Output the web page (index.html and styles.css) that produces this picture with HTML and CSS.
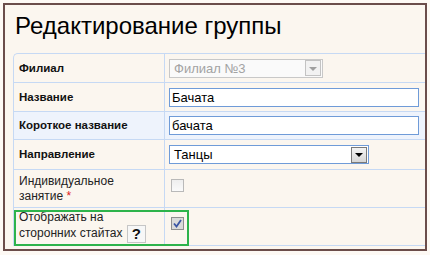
FILE: index.html
```html
<!DOCTYPE html>
<html lang="ru">
<head>
    <meta charset="UTF-8">
    <title>Редактирование группы</title>
    <link rel="stylesheet" href="styles.css">
</head>
<body>
    <div class="panel">
        <h1>Редактирование группы</h1>
        <table class="form-table">
            <tr>
                <td class="label bold">Филиал</td>
                <td class="value">
                    <div class="select disabled">
                        <span class="select-text">Филиал №3</span>
                        <span class="select-btn"><span class="arrow"></span></span>
                    </div>
                </td>
            </tr>
            <tr>
                <td class="label bold">Название</td>
                <td class="value"><div class="input">Бачата</div></td>
            </tr>
            <tr class="active">
                <td class="label bold">Короткое название</td>
                <td class="value"><div class="input">бачата</div></td>
            </tr>
            <tr>
                <td class="label bold">Направление</td>
                <td class="value">
                    <div class="select wide">
                        <span class="select-text">Танцы</span>
                        <span class="select-btn"><span class="arrow"></span></span>
                    </div>
                </td>
            </tr>
            <tr class="tall">
                <td class="label">Индивидуальное<br>занятие <span class="req">*</span></td>
                <td class="value top"><span class="check"></span></td>
            </tr>
            <tr class="tall">
                <td class="label highlight">
                    Отображать на<br>сторонних стайтах <span class="help">?</span>
                    <span class="outline"></span>
                </td>
                <td class="value top">
                    <span class="check checked">
                        <svg width="11" height="11" viewBox="0 0 11 11"><path d="M2 5.5 L4.5 8.5 L9 2" fill="none" stroke="#3a55a4" stroke-width="1.8"/></svg>
                    </span>
                </td>
            </tr>
        </table>
    </div>
</body>
</html>
```

FILE: styles.css
```css
body {
    margin: 0;
    background-color: #fdf9f4;
    font-family: "Liberation Sans", Arial, sans-serif;
}

.panel {
    margin: 3px;
    width: 412px;
    height: 244px;
    border: 2px solid #6b4d4a;
    background-color: #fbf6ef;
    padding-left: 8px;
}

h1 {
    font-size: 24px;
    font-weight: normal;
    color: #000;
    margin: 0;
    padding: 8px 0 0 2px;
    height: 48px;
    box-sizing: border-box;
    line-height: 26px;
}

.form-table {
    width: 100%;
    border-collapse: separate;
    border-spacing: 0;
    border-top: 1px solid #c6d9f4;
    border-left: 1px solid #c6d9f4;
    border-top-left-radius: 5px;
    font-size: 12px;
}

.form-table td {
    border-bottom: 1px solid #c6d9f4;
    height: 28px;
    padding: 0;
    vertical-align: middle;
}

.form-table tr.tall td {
    height: 37px;
}

.form-table tr:nth-child(3) td {
    height: 27px;
}

.form-table tr:nth-child(4) td {
    height: 29px;
}

.label {
    width: 145px;
    padding-left: 5px !important;
    border-right: 1px solid #c6d9f4;
    color: #222;
    line-height: 15px;
}

.label.bold {
    font-weight: bold;
    font-size: 11.5px;
    color: #111;
}

.value {
    padding-left: 4px !important;
    font-size: 13px;
}

.value.top {
    vertical-align: top;
}

tr.active td {
    background-color: #eef3fc;
}

.req {
    color: #e02020;
}

.input {
    width: 246px;
    height: 17px;
    border: 1px solid #6f9bd8;
    background: #fff;
    line-height: 17px;
    padding-left: 2px;
    color: #000;
}

.select {
    display: flex;
    align-items: center;
    height: 17px;
    border: 1px solid #c8c8c8;
    background: #fafafa;
    width: 152px;
}

.select-text {
    flex: 1;
    padding-left: 4px;
    color: #a3a3a3;
}

.select-btn {
    width: 16px;
    height: 16px;
    margin-right: 1px;
    border: 1px solid #c3c3c3;
    background: #f2f2f2;
    display: flex;
    align-items: center;
    justify-content: center;
    box-sizing: border-box;
}

.arrow {
    width: 0;
    height: 0;
    border-left: 4px solid transparent;
    border-right: 4px solid transparent;
    border-top: 4px solid #a0a0a0;
    margin-top: 1px;
}

.select.wide {
    width: 198px;
    border-color: #6f9bd8;
    background: #fff;
}

.select.wide .select-text {
    color: #000;
}

.select.wide .select-btn {
    border-color: #7a7a7a;
    background: linear-gradient(#f4f4f4, #d6d6d6);
}

.select.wide .arrow {
    border-top-color: #000;
}

.check {
    display: flex;
    align-items: center;
    justify-content: center;
    width: 13px;
    height: 13px;
    border: 1px solid #b9b9b9;
    background: linear-gradient(#eeeeee, #fafafa);
    box-sizing: border-box;
    margin: 9px 0 0 2px;
}

.check.checked {
    border-color: #8f8f8f;
    background: #dadada;
}

.highlight {
    position: relative;
}

.help {
    display: inline-block;
    width: 17px;
    height: 16px;
    border: 1px solid #c6c6c6;
    background: #f7f7f7;
    text-align: center;
    font-weight: bold;
    font-size: 15px;
    line-height: 16px;
    color: #111;
    vertical-align: middle;
    margin-left: 1px;
}

.outline {
    position: absolute;
    left: 0;
    top: 2px;
    right: -25px;
    bottom: -1px;
    border: 2px solid #2db34b;
}
```
